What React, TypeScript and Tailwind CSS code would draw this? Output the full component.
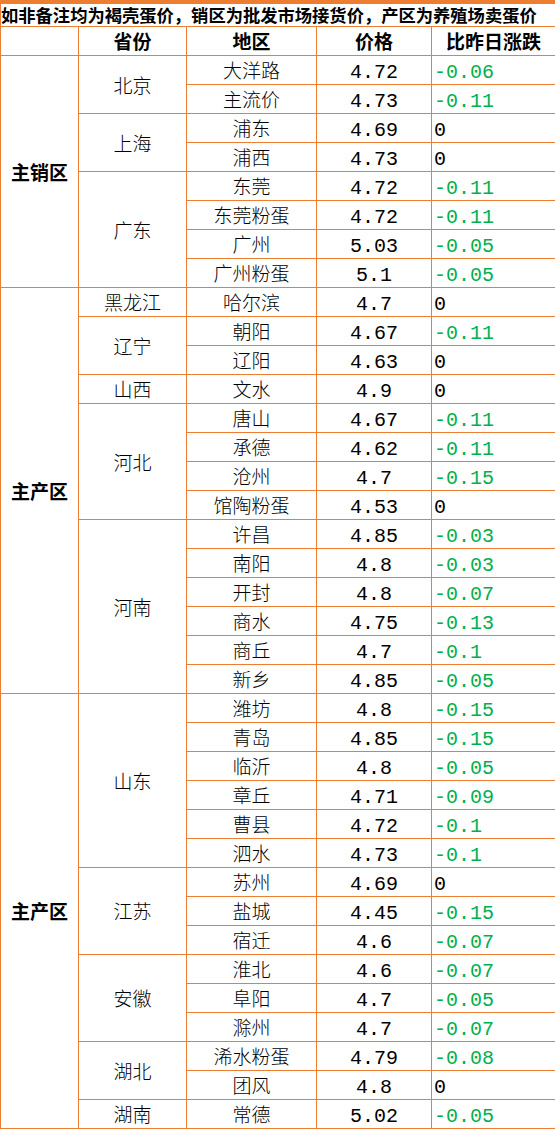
import React from "react";

type Row = [string, string, string];

interface Province {
  name: string;
  rows: Row[];
}

interface Zone {
  label: string;
  provinces: Province[];
}

const zones: Zone[] = [
  {
    label: "主销区",
    provinces: [
      { name: "北京", rows: [["大洋路", "4.72", "-0.06"], ["主流价", "4.73", "-0.11"]] },
      { name: "上海", rows: [["浦东", "4.69", "0"], ["浦西", "4.73", "0"]] },
      {
        name: "广东",
        rows: [
          ["东莞", "4.72", "-0.11"],
          ["东莞粉蛋", "4.72", "-0.11"],
          ["广州", "5.03", "-0.05"],
          ["广州粉蛋", "5.1", "-0.05"],
        ],
      },
    ],
  },
  {
    label: "主产区",
    provinces: [
      { name: "黑龙江", rows: [["哈尔滨", "4.7", "0"]] },
      { name: "辽宁", rows: [["朝阳", "4.67", "-0.11"], ["辽阳", "4.63", "0"]] },
      { name: "山西", rows: [["文水", "4.9", "0"]] },
      {
        name: "河北",
        rows: [
          ["唐山", "4.67", "-0.11"],
          ["承德", "4.62", "-0.11"],
          ["沧州", "4.7", "-0.15"],
          ["馆陶粉蛋", "4.53", "0"],
        ],
      },
      {
        name: "河南",
        rows: [
          ["许昌", "4.85", "-0.03"],
          ["南阳", "4.8", "-0.03"],
          ["开封", "4.8", "-0.07"],
          ["商水", "4.75", "-0.13"],
          ["商丘", "4.7", "-0.1"],
          ["新乡", "4.85", "-0.05"],
        ],
      },
    ],
  },
  {
    label: "主产区",
    provinces: [
      {
        name: "山东",
        rows: [
          ["潍坊", "4.8", "-0.15"],
          ["青岛", "4.85", "-0.15"],
          ["临沂", "4.8", "-0.05"],
          ["章丘", "4.71", "-0.09"],
          ["曹县", "4.72", "-0.1"],
          ["泗水", "4.73", "-0.1"],
        ],
      },
      { name: "江苏", rows: [["苏州", "4.69", "0"], ["盐城", "4.45", "-0.15"], ["宿迁", "4.6", "-0.07"]] },
      { name: "安徽", rows: [["淮北", "4.6", "-0.07"], ["阜阳", "4.7", "-0.05"], ["滁州", "4.7", "-0.07"]] },
      { name: "湖北", rows: [["浠水粉蛋", "4.79", "-0.08"], ["团风", "4.8", "0"]] },
      { name: "湖南", rows: [["常德", "5.02", "-0.05"]] },
    ],
  },
];

const cjk = "font-['Noto_Sans_CJK_SC',sans-serif]";
const mono = "font-['Liberation_Mono','Noto_Sans_CJK_SC',monospace]";
const cell = "border border-[#ed7d31] p-0 leading-none";

const App = () => {
  return (
    <div className="w-[555px] bg-white text-black">
      <table className="w-[555px] table-fixed border-collapse border-t-4 border-t-[#ed7d31]">
        <colgroup>
          <col className="w-[78px]" />
          <col className="w-[108px]" />
          <col className="w-[130px]" />
          <col className="w-[115px]" />
          <col className="w-[124px]" />
        </colgroup>
        <tbody>
          {/* Title */}
          <tr className="h-[24px]">
            <td
              colSpan={5}
              className={`${cell} border-t-0 overflow-hidden whitespace-nowrap text-[17.3px] font-bold ${cjk}`}
            >
              如非备注均为褐壳蛋价，销区为批发市场接货价，产区为养殖场卖蛋价
            </td>
          </tr>

          {/* Header */}
          <tr className={`h-[29px] text-[19px] font-bold ${cjk}`}>
            <td className={cell}></td>
            <td className={`${cell} text-center`}>省份</td>
            <td className={`${cell} text-center`}>地区</td>
            <td className={`${cell} text-center`}>价格</td>
            <td className={`${cell} text-center`}>比昨日涨跌</td>
          </tr>

          {zones.map((zone, zi) => {
            const zoneRows = zone.provinces.reduce((n, p) => n + p.rows.length, 0);
            return zone.provinces.map((prov, pi) =>
              prov.rows.map((row, ri) => (
                <tr key={`${zi}-${pi}-${ri}`} className="h-[29px]">
                  {pi === 0 && ri === 0 && (
                    <td
                      rowSpan={zoneRows}
                      className={`${cell} text-center text-[19px] font-bold ${cjk}`}
                    >
                      {zone.label}
                    </td>
                  )}
                  {ri === 0 && (
                    <td
                      rowSpan={prov.rows.length}
                      className={`${cell} text-center text-[19px] font-light ${cjk}`}
                    >
                      {prov.name}
                    </td>
                  )}
                  <td className={`${cell} text-center text-[19px] font-light ${cjk}`}>{row[0]}</td>
                  <td className={`${cell} pt-[6px] text-center text-[20px] ${mono}`}>{row[1]}</td>
                  <td
                    className={`${cell} pt-[6px] pl-[2px] text-left text-[20px] ${mono} ${
                      row[2] === "0" ? "text-black" : "text-[#00b050]"
                    }`}
                  >
                    {row[2]}
                  </td>
                </tr>
              ))
            );
          })}
        </tbody>
      </table>
    </div>
  );
};

export default App;
